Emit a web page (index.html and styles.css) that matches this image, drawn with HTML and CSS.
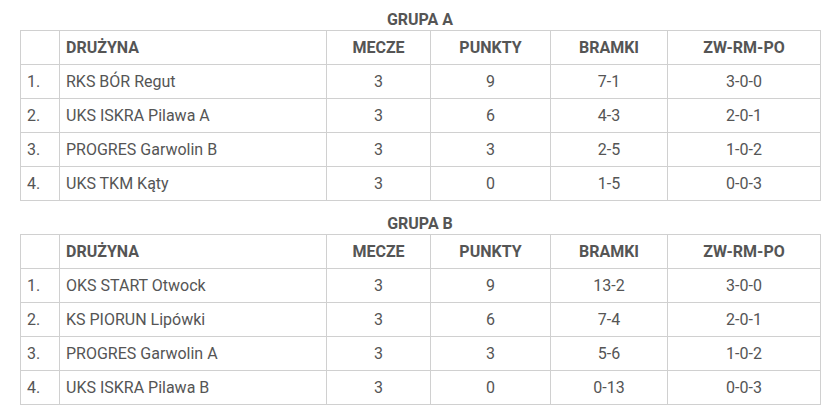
FILE: index.html
```html
<!DOCTYPE html>
<html lang="pl">
<head>
<meta charset="utf-8">
<title>Grupy</title>
<link rel="stylesheet" href="styles.css">
</head>
<body>
<div class="page">
  <section class="group">
    <h3 class="caption">GRUPA A</h3>
    <table class="standings">
      <colgroup>
        <col class="c-pos"><col class="c-team"><col class="c-m"><col class="c-p"><col class="c-b"><col class="c-z">
      </colgroup>
      <thead>
        <tr><th></th><th class="left">DRUŻYNA</th><th>MECZE</th><th>PUNKTY</th><th>BRAMKI</th><th>ZW-RM-PO</th></tr>
      </thead>
      <tbody>
        <tr><td class="left">1.</td><td class="left">RKS BÓR Regut</td><td>3</td><td>9</td><td>7-1</td><td>3-0-0</td></tr>
        <tr><td class="left">2.</td><td class="left">UKS ISKRA Pilawa A</td><td>3</td><td>6</td><td>4-3</td><td>2-0-1</td></tr>
        <tr><td class="left">3.</td><td class="left">PROGRES Garwolin B</td><td>3</td><td>3</td><td>2-5</td><td>1-0-2</td></tr>
        <tr><td class="left">4.</td><td class="left">UKS TKM Kąty</td><td>3</td><td>0</td><td>1-5</td><td>0-0-3</td></tr>
      </tbody>
    </table>
  </section>
  <section class="group">
    <h3 class="caption">GRUPA B</h3>
    <table class="standings">
      <colgroup>
        <col class="c-pos"><col class="c-team"><col class="c-m"><col class="c-p"><col class="c-b"><col class="c-z">
      </colgroup>
      <thead>
        <tr><th></th><th class="left">DRUŻYNA</th><th>MECZE</th><th>PUNKTY</th><th>BRAMKI</th><th>ZW-RM-PO</th></tr>
      </thead>
      <tbody>
        <tr><td class="left">1.</td><td class="left">OKS START Otwock</td><td>3</td><td>9</td><td>13-2</td><td>3-0-0</td></tr>
        <tr><td class="left">2.</td><td class="left">KS PIORUN Lipówki</td><td>3</td><td>6</td><td>7-4</td><td>2-0-1</td></tr>
        <tr><td class="left">3.</td><td class="left">PROGRES Garwolin A</td><td>3</td><td>3</td><td>5-6</td><td>1-0-2</td></tr>
        <tr><td class="left">4.</td><td class="left">UKS ISKRA Pilawa B</td><td>3</td><td>0</td><td>0-13</td><td>0-0-3</td></tr>
      </tbody>
    </table>
  </section>
</div>
</body>
</html>
```

FILE: styles.css
```css
html, body {
  margin: 0;
  padding: 0;
  background: #ffffff;
}

body {
  font-family: Roboto, "Liberation Sans", sans-serif;
  color: #555555;
}

.page {
  padding: 10px 0 0 20px;
  width: 800px;
}

.group + .group {
  margin-top: 13px;
}

.caption {
  margin: 0;
  height: 20px;
  line-height: 20px;
  font-size: 16px;
  font-weight: 700;
  text-align: center;
  color: #555555;
}

.standings {
  width: 800px;
  table-layout: fixed;
  border-collapse: collapse;
  font-size: 16px;
}

.c-pos { width: 39px; }
.c-team { width: 267px; }
.c-m { width: 104px; }
.c-p { width: 120px; }
.c-b { width: 117px; }
.c-z { width: 153px; }

.standings th,
.standings td {
  border: 1px solid #d0d0d0;
  height: 34px;
  padding: 0 6px;
  box-sizing: border-box;
  line-height: 18px;
  text-align: center;
  vertical-align: middle;
  white-space: nowrap;
}

.standings th {
  font-weight: 700;
}

.standings .left {
  text-align: left;
}
```
